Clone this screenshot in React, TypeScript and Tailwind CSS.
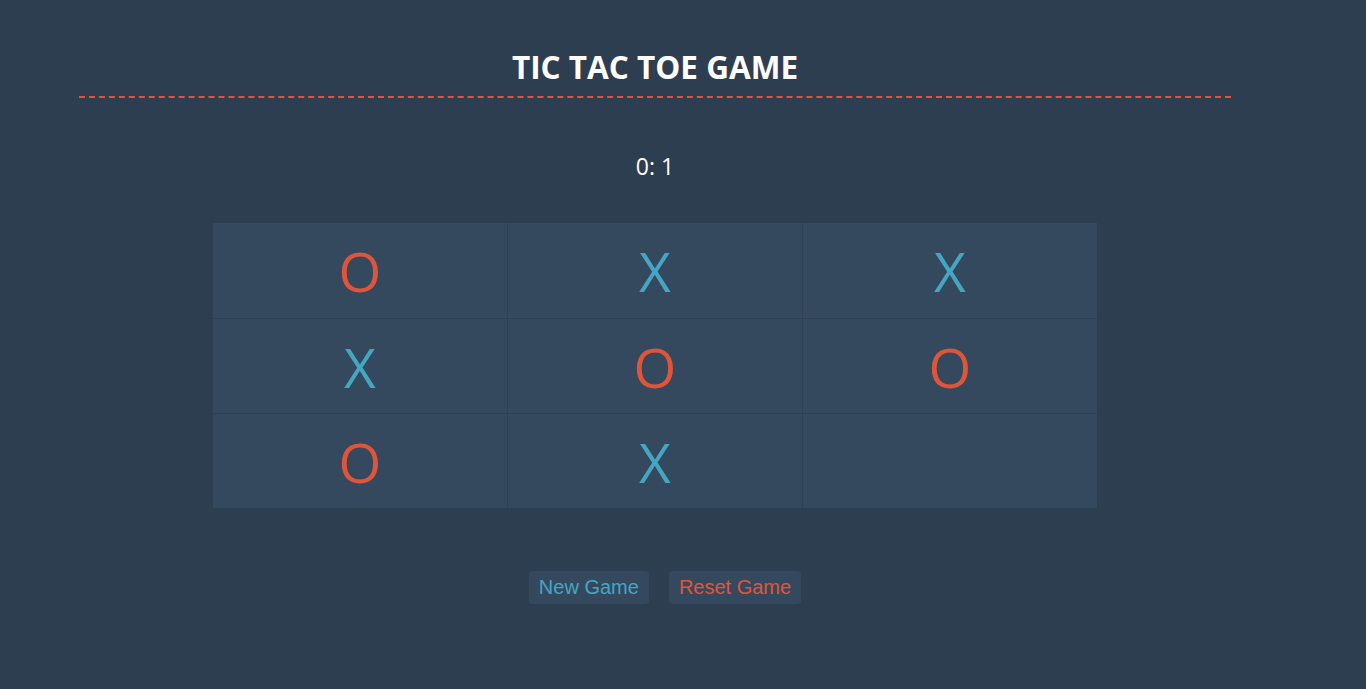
import React from "react";

const board: string[] = ["O", "X", "X", "X", "O", "O", "O", "X", ""];

export default function App() {
  return (
    <div className="min-h-[689px] w-full bg-[#2e3e51] font-['Open_Sans',sans-serif]">
      <div className="ml-[79px] w-[1152px]">
        {/* Titre */}
        <div className="pt-[47px] border-b-2 border-dashed border-[#e0553a]">
          <h1 className="text-center text-[31.5px] leading-[40px] font-bold text-white h-[49px]">
            TIC TAC TOE GAME
          </h1>
        </div>

        <p className="mt-[53px] text-center text-[23px] leading-[30px] text-white">0: 1</p>

        <div className="mx-auto mt-[42px] grid w-[884px] grid-cols-[294px_294px_294px] grid-rows-[95px_94px_94px] gap-px bg-[#2f4054]">
          {board.map((v, i) => (
            <div
              key={i}
              className={`flex items-center justify-center bg-[#35495e] text-[55px] leading-none ${
                v === "O" ? "text-[#e0553a]" : "text-[#45a6c3]"
              }`}
            >
              {v}
            </div>
          ))}
        </div>

        <div className="mt-[63px] flex justify-center gap-5 pl-5 font-['Liberation_Sans',Arial,sans-serif]">
          <button className="h-[33px] rounded bg-[#35495e] px-[10px] pb-px text-[20px] text-[#45a6c3]">
            New Game
          </button>
          <button className="h-[33px] rounded bg-[#35495e] px-[10px] pb-px text-[20px] text-[#e0553a]">
            Reset Game
          </button>
        </div>
      </div>
    </div>
  );
}
